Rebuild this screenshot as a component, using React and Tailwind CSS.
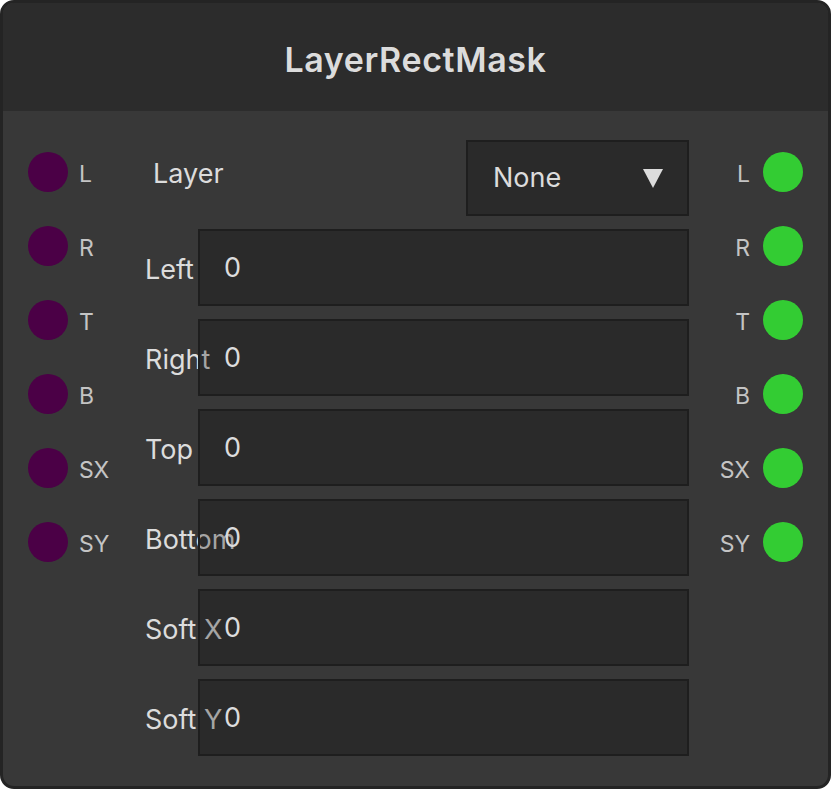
import React from 'react';

// Node card: one dropdown and six number fields, with input sockets on the left and outputs on the right
const sockets = ['L', 'R', 'T', 'B', 'SX', 'SY'];

const fields = [
  { label: 'Left', value: '0' },
  { label: 'Right', value: '0' },
  { label: 'Top', value: '0' },
  { label: 'Bottom', value: '0' },
  { label: 'Soft X', value: '0' },
  { label: 'Soft Y', value: '0' },
];

const App = () => {
  return (
    <div
      className="w-[831px] h-[789px] bg-[#383838] border-[3px] border-[#242424] rounded-[14px] overflow-hidden flex flex-col"
      style={{ fontFamily: 'Inter, "Noto Sans", sans-serif' }}
    >
      {/* Title bar */}
      <div className="h-[108px] shrink-0 bg-[#2c2c2c] flex items-center justify-center pt-[4px]">
        <h1 className="text-[34px] font-semibold text-[#dcdcdc] tracking-[0.6px]">LayerRectMask</h1>
      </div>

      <div className="flex px-[25px]">
        {/* Inputs */}
        <div className="w-[117px] pt-[41px] flex flex-col gap-[34px]">
          {sockets.map((s) => (
            <div key={s} className="flex items-center h-[40px] gap-[11px]">
              <span className="w-[40px] h-[40px] rounded-full bg-[#4b0046]" />
              <span className="pt-[4px] text-[23px] text-[#c4c4c4]">{s}</span>
            </div>
          ))}
        </div>

        {/* Controls */}
        <div className="w-[544px] pt-[29px] flex flex-col gap-[13px]">
          <div className="flex items-center justify-between h-[76px]">
            <span className="pl-[8px] pb-[8px] text-[27px] text-[#dcdcdc]">Layer</span>
            <div className="w-[223px] h-[76px] bg-[#2a2a2a] border-2 border-[#1e1e1e] flex items-center justify-between pl-[25px] pr-[24px]">
              <span className="text-[27px] text-[#dcdcdc]">None</span>
              <svg width="20" height="19" viewBox="0 0 20 19">
                <polygon points="0,0 20,0 10,19" fill="#dcdcdc" />
              </svg>
            </div>
          </div>

          {fields.map((f) => (
            <div key={f.label} className="flex items-center h-[77px]">
              <span className="w-[53px] shrink-0 whitespace-nowrap pt-[5px] text-[27px] text-[#dcdcdc]">{f.label}</span>
              <div className="relative w-[491px] h-[77px] bg-black/25 border-2 border-[#1e1e1e] flex items-center pl-[25px]">
                <span className="-ml-[1px] pt-[2px] text-[27px] text-[#dcdcdc]">{f.value}</span>
              </div>
            </div>
          ))}
        </div>

        {/* Outputs */}
        <div className="w-[114px] pt-[41px] flex flex-col gap-[34px]">
          {sockets.map((s) => (
            <div key={s} className="flex items-center justify-end h-[40px] gap-[13px]">
              <span className="pt-[4px] text-[23px] text-[#c4c4c4]">{s}</span>
              <span className="w-[40px] h-[40px] rounded-full bg-[#33cc33]" />
            </div>
          ))}
        </div>
      </div>
    </div>
  );
};

export default App;
